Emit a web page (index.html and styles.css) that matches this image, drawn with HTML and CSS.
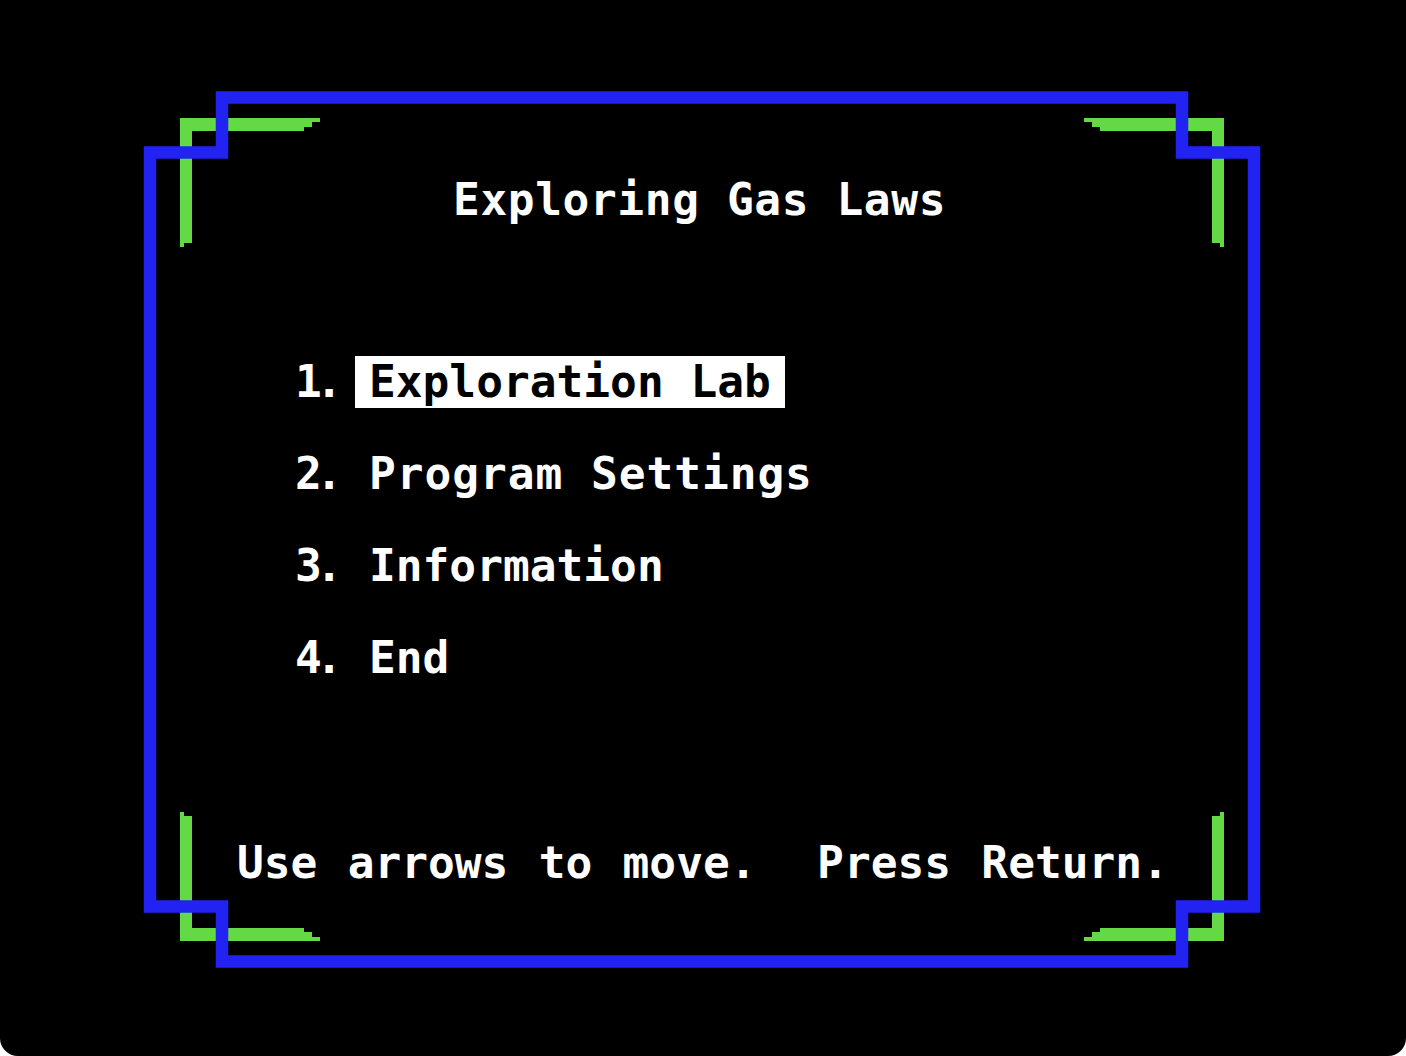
FILE: index.html
```html
<!DOCTYPE html>
<html lang="en">
<head>
<meta charset="utf-8">
<title>Exploring Gas Laws</title>
<link rel="stylesheet" href="styles.css">
</head>
<body>
<div class="screen">
  <!-- decorative double border: blue outline with green corner brackets -->
  <svg class="frame" width="1406" height="1056" viewBox="0 0 1406 1056" aria-hidden="true">
    <g class="brackets">
      <polygon points="180,118 320,118 320,122 312,122 312,127 304,127 304,131 192,131 192,243 184,243 184,247 180,247"/>
      <polygon points="1224,118 1084,118 1084,122 1092,122 1092,127 1100,127 1100,131 1212,131 1212,243 1220,243 1220,247 1224,247"/>
      <polygon points="180,941 320,941 320,937 312,937 312,932 304,932 304,928 192,928 192,816 184,816 184,812 180,812"/>
      <polygon points="1224,941 1084,941 1084,937 1092,937 1092,932 1100,932 1100,928 1212,928 1212,816 1220,816 1220,812 1224,812"/>
    </g>
    <path class="outline" d="M222,97.5 H1182 V152.5 H1254 V906.5 H1182 V961.5 H222 V906.5 H150 V152.5 H222 Z"/>
  </svg>

  <h1 class="title">Exploring Gas Laws</h1>

  <ol class="menu">
    <li class="menu-item"><span class="num">1.</span><span class="label selected">Exploration Lab</span></li>
    <li class="menu-item"><span class="num">2.</span><span class="label wide">Program Settings</span></li>
    <li class="menu-item"><span class="num">3.</span><span class="label">Information</span></li>
    <li class="menu-item"><span class="num">4.</span><span class="label">End</span></li>
  </ol>

  <p class="hint">Use arrows to move.  Press Return.</p>
</div>
</body>
</html>
```

FILE: styles.css
```css
html,
body {
  margin: 0;
  background: #ffffff;
}

.screen {
  position: relative;
  box-sizing: border-box;
  width: 1406px;
  height: 1056px;
  padding-top: 174px;
  background: #000000;
  border-radius: 0 0 18px 18px;
  overflow: hidden;
  color: #ffffff;
  font-family: "DejaVu Sans Mono", "Liberation Mono", monospace;
  font-weight: bold;
  font-size: 44.5px;
  line-height: 52px;
}

.frame {
  position: absolute;
  left: 0;
  top: 0;
}

.brackets polygon {
  fill: #62d945;
}

.outline {
  fill: none;
  stroke: #2222f2;
  stroke-width: 12.5;
  stroke-linejoin: miter;
}

.title {
  margin: 0 0 0 453px;
  height: 52px;
  font: inherit;
  letter-spacing: 0.6px;
  white-space: pre;
}

.menu {
  list-style: none;
  margin: 130px 0 0 292px;
  padding: 0;
  display: flex;
  flex-direction: column;
  gap: 40px;
}

.menu-item {
  display: flex;
  height: 52px;
  white-space: pre;
}

.num {
  box-sizing: border-box;
  width: 63px;
  padding-left: 3px;
  letter-spacing: -6px;
}

.label {
  padding: 0 14px 0 14px;
}

.label.wide {
  letter-spacing: 0.95px;
}

.label.selected {
  background: #ffffff;
  color: #000000;
}

.hint {
  margin: 153px 0 0 237px;
  white-space: pre;
  word-spacing: 3.5px;
}
```
